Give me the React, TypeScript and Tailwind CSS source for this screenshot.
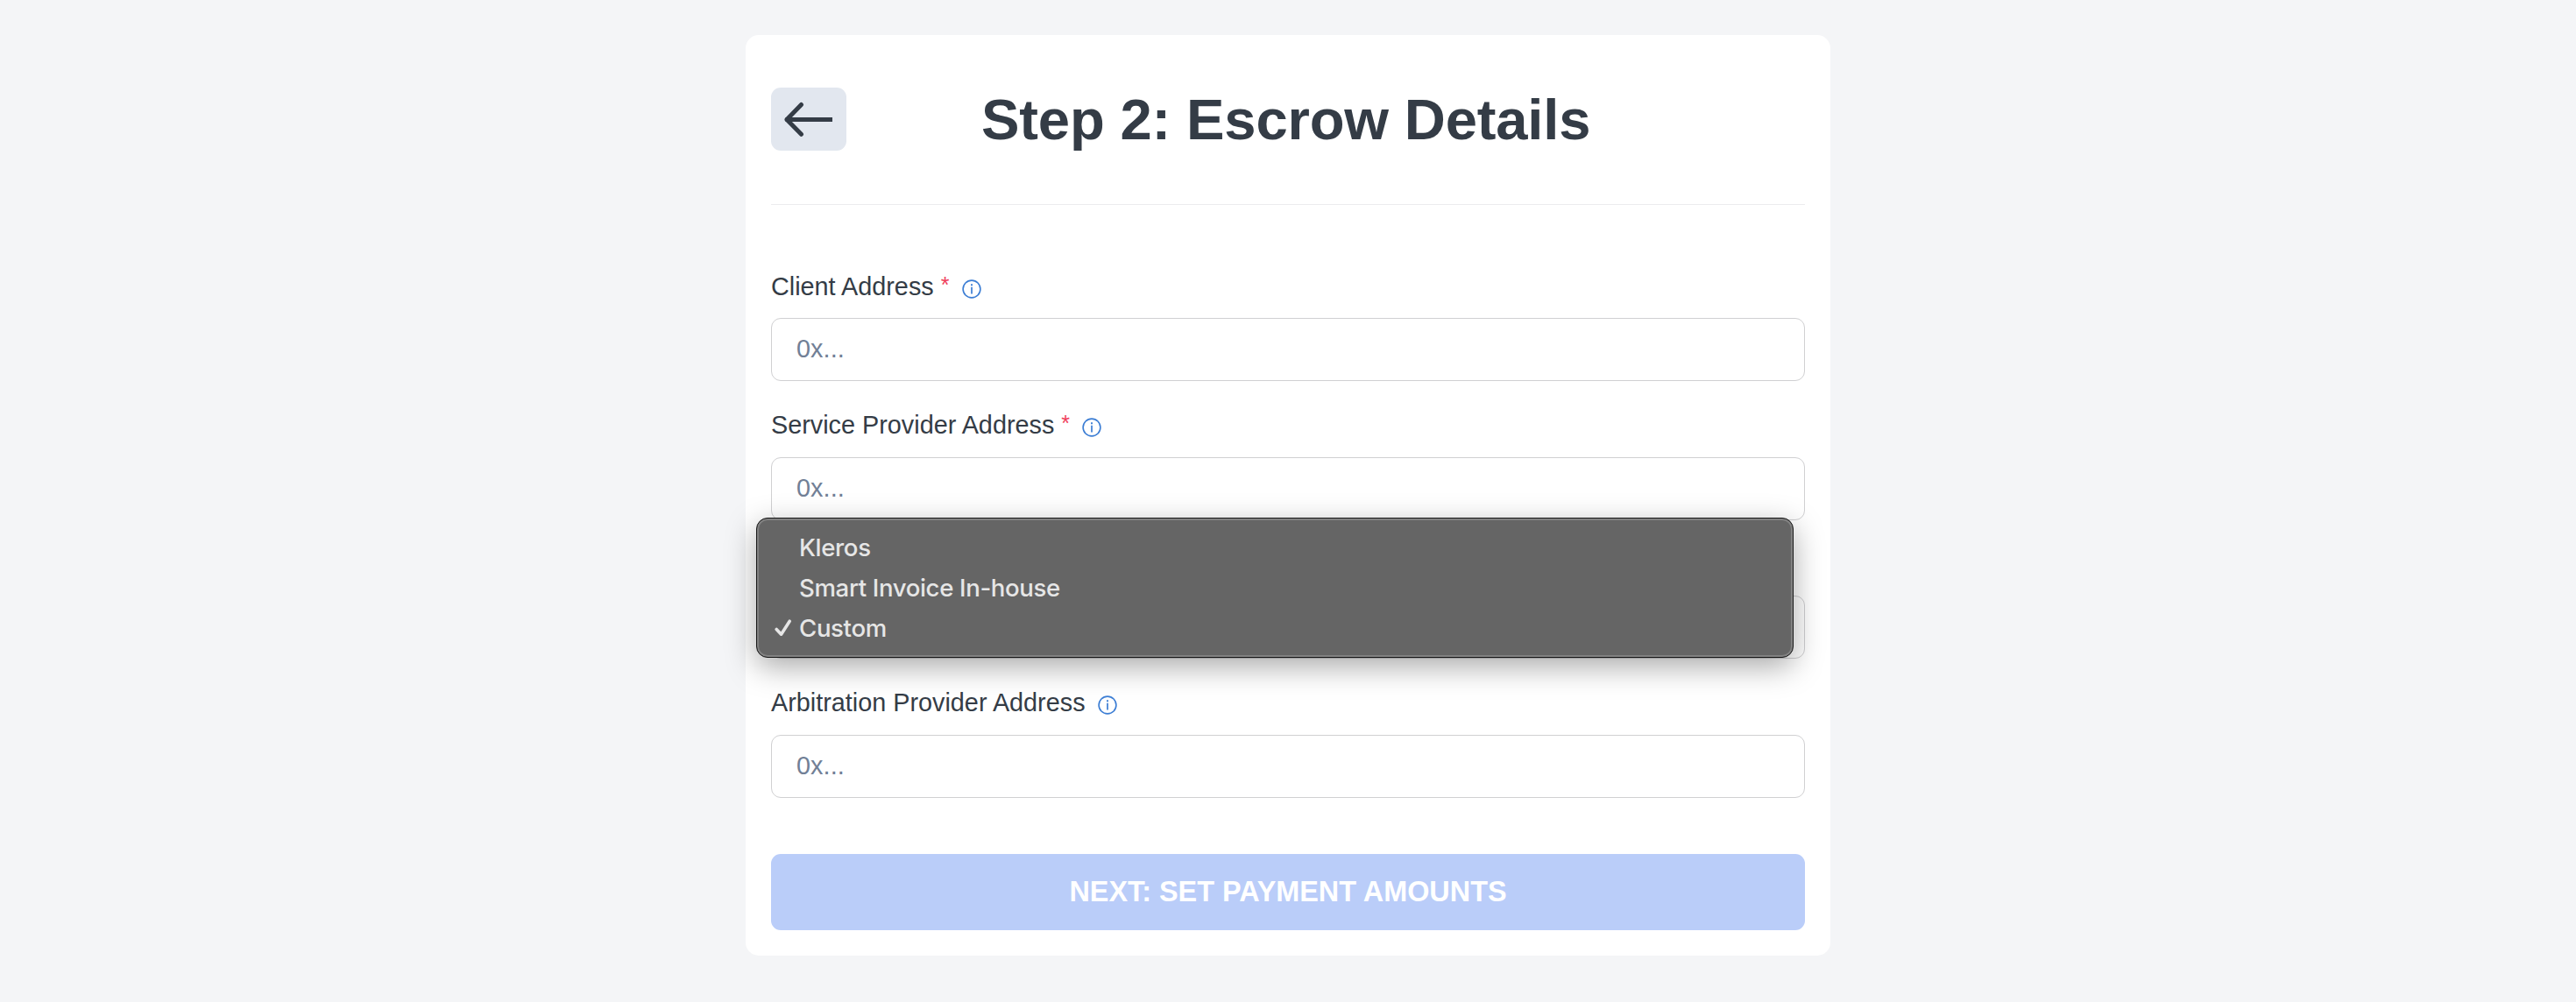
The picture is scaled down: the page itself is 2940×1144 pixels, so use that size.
import React from "react";

function InfoIcon() {
  return (
    <svg className="block h-[22px] w-[22px] shrink-0" viewBox="0 0 22 22" fill="none">
      <circle cx="11" cy="11" r="9.9" stroke="#3b7dd4" strokeWidth="1.6" />
      <path d="M11 8.8V16.4" stroke="#3b7dd4" strokeWidth="1.7" />
      <path d="M11 5.2V7.2" stroke="#3b7dd4" strokeWidth="1.9" />
    </svg>
  );
}

function Label({ text, required = false }: { text: string; required?: boolean }) {
  return (
    <div className="flex items-start">
      <span className="whitespace-nowrap text-[28.8px] leading-[36px] text-[#343c46]">{text}</span>
      {required && <span className="ml-[8px] w-[11px] text-[25px] leading-[33px] text-[#f03e5c]">*</span>}
      <span className={required ? "ml-[13px] pt-[10px]" : "ml-[14px] pt-[10px]"}>
        <InfoIcon />
      </span>
    </div>
  );
}

function AddressInput() {
  return (
    <div className="flex h-[72px] items-center rounded-[11px] border border-[#d0d0d2] bg-white px-[28px] text-[28.8px] tracking-[0.1px] text-[#718096]">
      0x...
    </div>
  );
}

function SelectMenu() {
  return (
    <div className="absolute -top-[90px] -left-[18px] h-[160px] w-[1184px] rounded-[13px] border border-[#161616] bg-[#656565] pt-[10px] font-['Inter'] text-[27.6px] leading-[46px] font-[450] tracking-[-0.36px] text-[#e6e6e6] shadow-[0_10px_34px_rgba(0,0,0,0.34),inset_0_0_0_2px_#828282]">
      <div className="pl-[48px]">Kleros</div>
      <div className="pl-[48px]">Smart Invoice In-house</div>
      <div className="flex">
        <span className="flex w-[48px] items-center pl-[20px]">
          <svg className="h-[20px] w-[20px]" viewBox="0 0 20 20" fill="none">
            <path d="M2.2 11.5 7.6 17.2 17.2 2.2" stroke="#e6e6e6" strokeWidth="3.6" strokeLinecap="round" strokeLinejoin="round" />
          </svg>
        </span>
        <span>Custom</span>
      </div>
    </div>
  );
}

export default function App() {
  return (
    <main className="flex h-[1144px] justify-center bg-[#f4f5f7] pt-[40px] font-['Liberation_Sans',Arial,sans-serif]">
      <section className="h-[1051px] w-[1238px] rounded-[15px] bg-white px-[29px]">
        <header className="flex h-[194px] items-start border-b border-[#ececee] pt-[60px]">
          <button className="flex h-[72px] w-[86px] items-center justify-center rounded-[11px] bg-[#e2e7ef]">
            <svg className="h-[40px] w-[56px]" viewBox="0 0 56 40" fill="none">
              <path d="M19.5 3.5 3 20.5 19.5 37.3" stroke="#343c46" strokeWidth="5" strokeLinecap="round" strokeLinejoin="round" />
              <path d="M4 20.5H52.5" stroke="#343c46" strokeWidth="5" strokeLinecap="square" />
            </svg>
          </button>
          <h1 className="ml-[154px] whitespace-nowrap text-[65.2px] leading-[74px] font-bold tracking-[-0.18px] text-[#343c46]">
            Step 2: Escrow Details
          </h1>
        </header>

        <form className="pt-[75px]">
          <div className="mb-[32px]">
            <div className="h-[54px]">
              <Label text="Client Address" required />
            </div>
            <AddressInput />
          </div>
          <div className="mb-[32px]">
            <div className="h-[55px]">
              <Label text="Service Provider Address" required />
            </div>
            <AddressInput />
          </div>
          <div className="mb-[32px] pt-[54px]">
            <div className="relative h-[72px] rounded-[11px] border border-[#d0d0d2] bg-white">
              <SelectMenu />
            </div>
          </div>
          <div className="relative">
            <div className="h-[55px]">
              <Label text="Arbitration Provider Address" />
            </div>
            <AddressInput />
          </div>
          <button
            type="button"
            className="mt-[64px] flex h-[87px] w-full items-center justify-center rounded-[11px] bg-[#bacdf9] text-[32.4px] font-bold whitespace-nowrap text-white"
          >
            NEXT: SET PAYMENT AMOUNTS
          </button>
        </form>
      </section>
    </main>
  );
}
